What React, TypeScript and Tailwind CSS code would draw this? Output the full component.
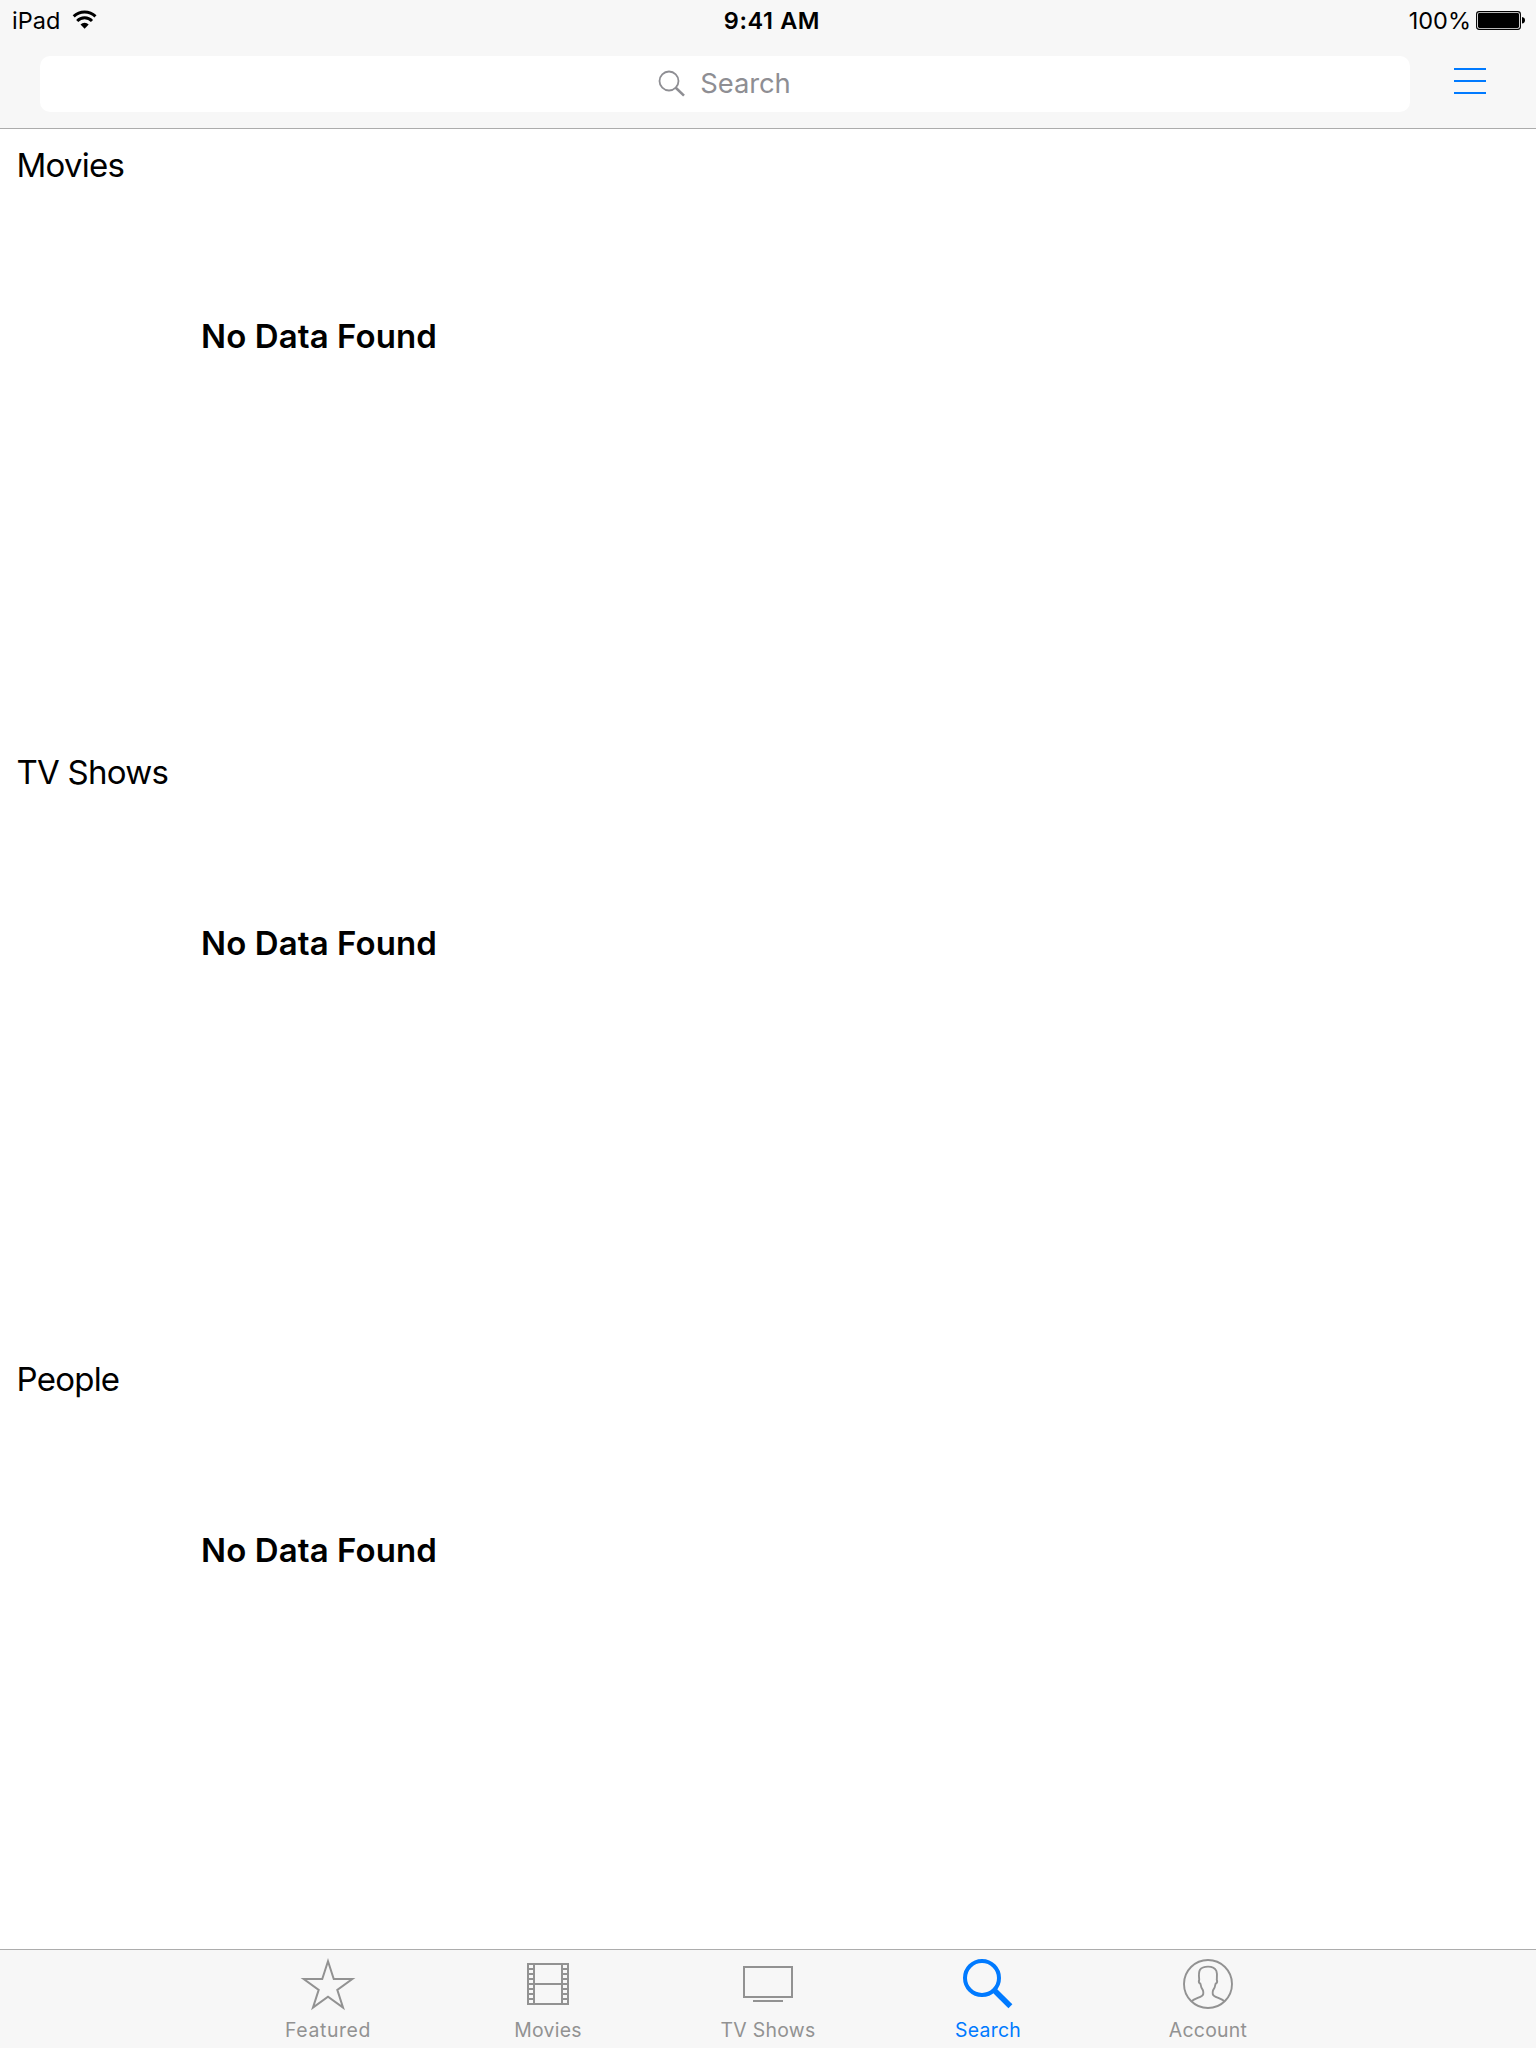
import type { ReactNode } from "react";

const sections = ["Movies", "TV Shows", "People"];

function WifiIcon() {
  return (
    <svg width="26" height="20" viewBox="0 0 26 20" fill="none" stroke="#000" strokeWidth="2.9">
      <path d="M1.7 6.4 A15.6 15.6 0 0 1 23.5 6.4" />
      <path d="M5.2 11 A10.2 10.2 0 0 1 20 11" />
      <path d="M12.6 18.8 L8.5 14.4 A5.8 5.8 0 0 1 16.7 14.4 Z" fill="#000" stroke="none" />
    </svg>
  );
}

function BatteryIcon() {
  return (
    <svg width="50" height="20" viewBox="0 0 50 20">
      <rect x="0.6" y="1.6" width="43.8" height="17.8" rx="2.6" fill="none" stroke="#000" strokeWidth="1.1" />
      <rect x="2" y="3" width="41" height="15" rx="1.4" fill="#000" />
      <path d="M46 7 C48 7.3 49 8.5 49 10.3 C49 12.1 48 13.3 46 13.6 Z" fill="#000" />
    </svg>
  );
}

function StarIcon() {
  return (
    <svg width="60" height="60" viewBox="0 0 60 60" fill="none" stroke="#929292" strokeWidth="2">
      <path d="M30 7.3 L35.75 25 H54.3 L39.3 35.9 L45.05 53.6 L30 42.7 L14.95 53.6 L20.7 35.9 L5.7 25 H24.25 Z" />
    </svg>
  );
}

function FilmIcon() {
  const rungs = [15, 20, 25, 30, 35, 40, 45];
  return (
    <svg width="60" height="60" viewBox="0 0 60 60" fill="none" stroke="#929292" strokeWidth="2">
      <path d="M10 10 H50 V50 H10 Z M16 10 V50 M44 10 V50 M16 30 H44" />
      {rungs.map((y) => (
        <path key={y} d={`M10 ${y} H16 M44 ${y} H50`} />
      ))}
    </svg>
  );
}

function TvIcon() {
  return (
    <svg width="60" height="60" viewBox="0 0 60 60" fill="none" stroke="#929292" strokeWidth="2">
      <path d="M6 13 H54 V43 H6 Z M15 47 H45" />
    </svg>
  );
}

function SearchTabIcon() {
  return (
    <svg width="60" height="60" viewBox="0 0 60 60" fill="none" stroke="#007aff">
      <circle cx="24" cy="24" r="17" strokeWidth="4" />
      <path d="M36 36 L52.4 52.2" strokeWidth="5.6" />
    </svg>
  );
}

function AccountIcon() {
  return (
    <svg width="60" height="60" viewBox="0 0 60 60" fill="none" stroke="#929292" strokeWidth="1.9">
      <circle cx="30" cy="30" r="24" />
      <path d="M13.5 47.2 C16.5 44.8 21.5 43.6 23.8 42 C25.6 40.8 25.5 38.2 25 36.4 C23.6 34.6 22.8 32.4 22.5 30 C21 29 20.6 27 21.2 25.6 C20.8 22 20.4 18.6 22 15.8 C23.4 13.6 26.6 12.6 30 12.6 C34 12.6 37.2 14.2 38.4 17 C39.4 19.6 39 22.6 38.8 25.6 C39.4 27 39 29 37.5 30 C37.2 32.4 36.4 34.6 35 36.4 C34.5 38.2 34.4 40.8 36.2 42 C38.5 43.6 43.5 44.8 46.5 47.2" />
    </svg>
  );
}

type TabProps = { label: string; icon: ReactNode; color?: string; tracking?: string };

function Tab({ label, icon, color = "text-[#929292]", tracking = "tracking-[0.3px]" }: TabProps) {
  return (
    <div className={`flex w-[220px] flex-col items-center pt-1 text-[19.4px] leading-6 ${color} ${tracking}`}>
      {icon}
      <span className="mt-1">{label}</span>
    </div>
  );
}

export default function App() {
  return (
    <div className="flex h-[2048px] w-[1536px] flex-col bg-white font-[Inter,sans-serif] text-black">
      <header className="flex h-[129px] flex-col border-b border-[#acacac] bg-[#f7f7f7]">
        <div className="grid h-10 grid-cols-3 items-start text-[23.5px] leading-[42px]">
          <div className="flex items-start pl-3">
            <span>iPad</span>
            <span className="mt-[10px] ml-3"><WifiIcon /></span>
          </div>
          <span className="pl-2 text-center font-semibold tracking-[0.6px]">9:41 AM</span>
          <div className="flex items-start justify-end gap-[5px] pr-[10px]">
            <span>100%</span>
            <span className="mt-[10px]"><BatteryIcon /></span>
          </div>
        </div>
        <div className="mt-4 flex items-center pl-10">
          <div className="flex h-14 w-[1370px] items-center justify-center rounded-[10px] bg-white pr-px text-[27.4px] text-[#8e8e93]">
            <svg width="28" height="28" viewBox="0 0 28 28" fill="none" stroke="currentColor">
              <circle cx="11" cy="11" r="9.5" strokeWidth="1.8" />
              <path d="M17.5 17.5 L26 25.6" strokeWidth="2.6" />
            </svg>
            <span className="-mt-[3px] ml-[14px] leading-8 tracking-[-0.1px]">Search</span>
          </div>
          <div className="mb-1.5 ml-11 flex w-8 flex-col gap-2.5">
            <span className="h-0.5 bg-[#007aff]" />
            <span className="h-0.5 bg-[#007aff]" />
            <span className="h-0.5 bg-[#007aff]" />
          </div>
        </div>
      </header>
      <main className="flex-1 overflow-hidden">
        {sections.map((title) => (
          <section key={title} className="h-[607px]">
            <h2 className="pl-[16.5px] text-[33px] leading-[72px] tracking-[-0.75px]">{title}</h2>
            <p className="pl-[201px] text-[33px] leading-[270px] font-semibold tracking-[0.1px]">No Data Found</p>
          </section>
        ))}
      </main>
      <nav className="flex h-[99px] justify-center border-t border-[#acacac] bg-[#f7f7f7]">
        <Tab label="Featured" icon={<StarIcon />} tracking="tracking-[0.6px]" />
        <Tab label="Movies" icon={<FilmIcon />} />
        <Tab label="TV Shows" icon={<TvIcon />} />
        <Tab label="Search" icon={<SearchTabIcon />} color="text-[#007aff]" tracking="tracking-[0.3px]" />
        <Tab label="Account" icon={<AccountIcon />} />
      </nav>
    </div>
  );
}
